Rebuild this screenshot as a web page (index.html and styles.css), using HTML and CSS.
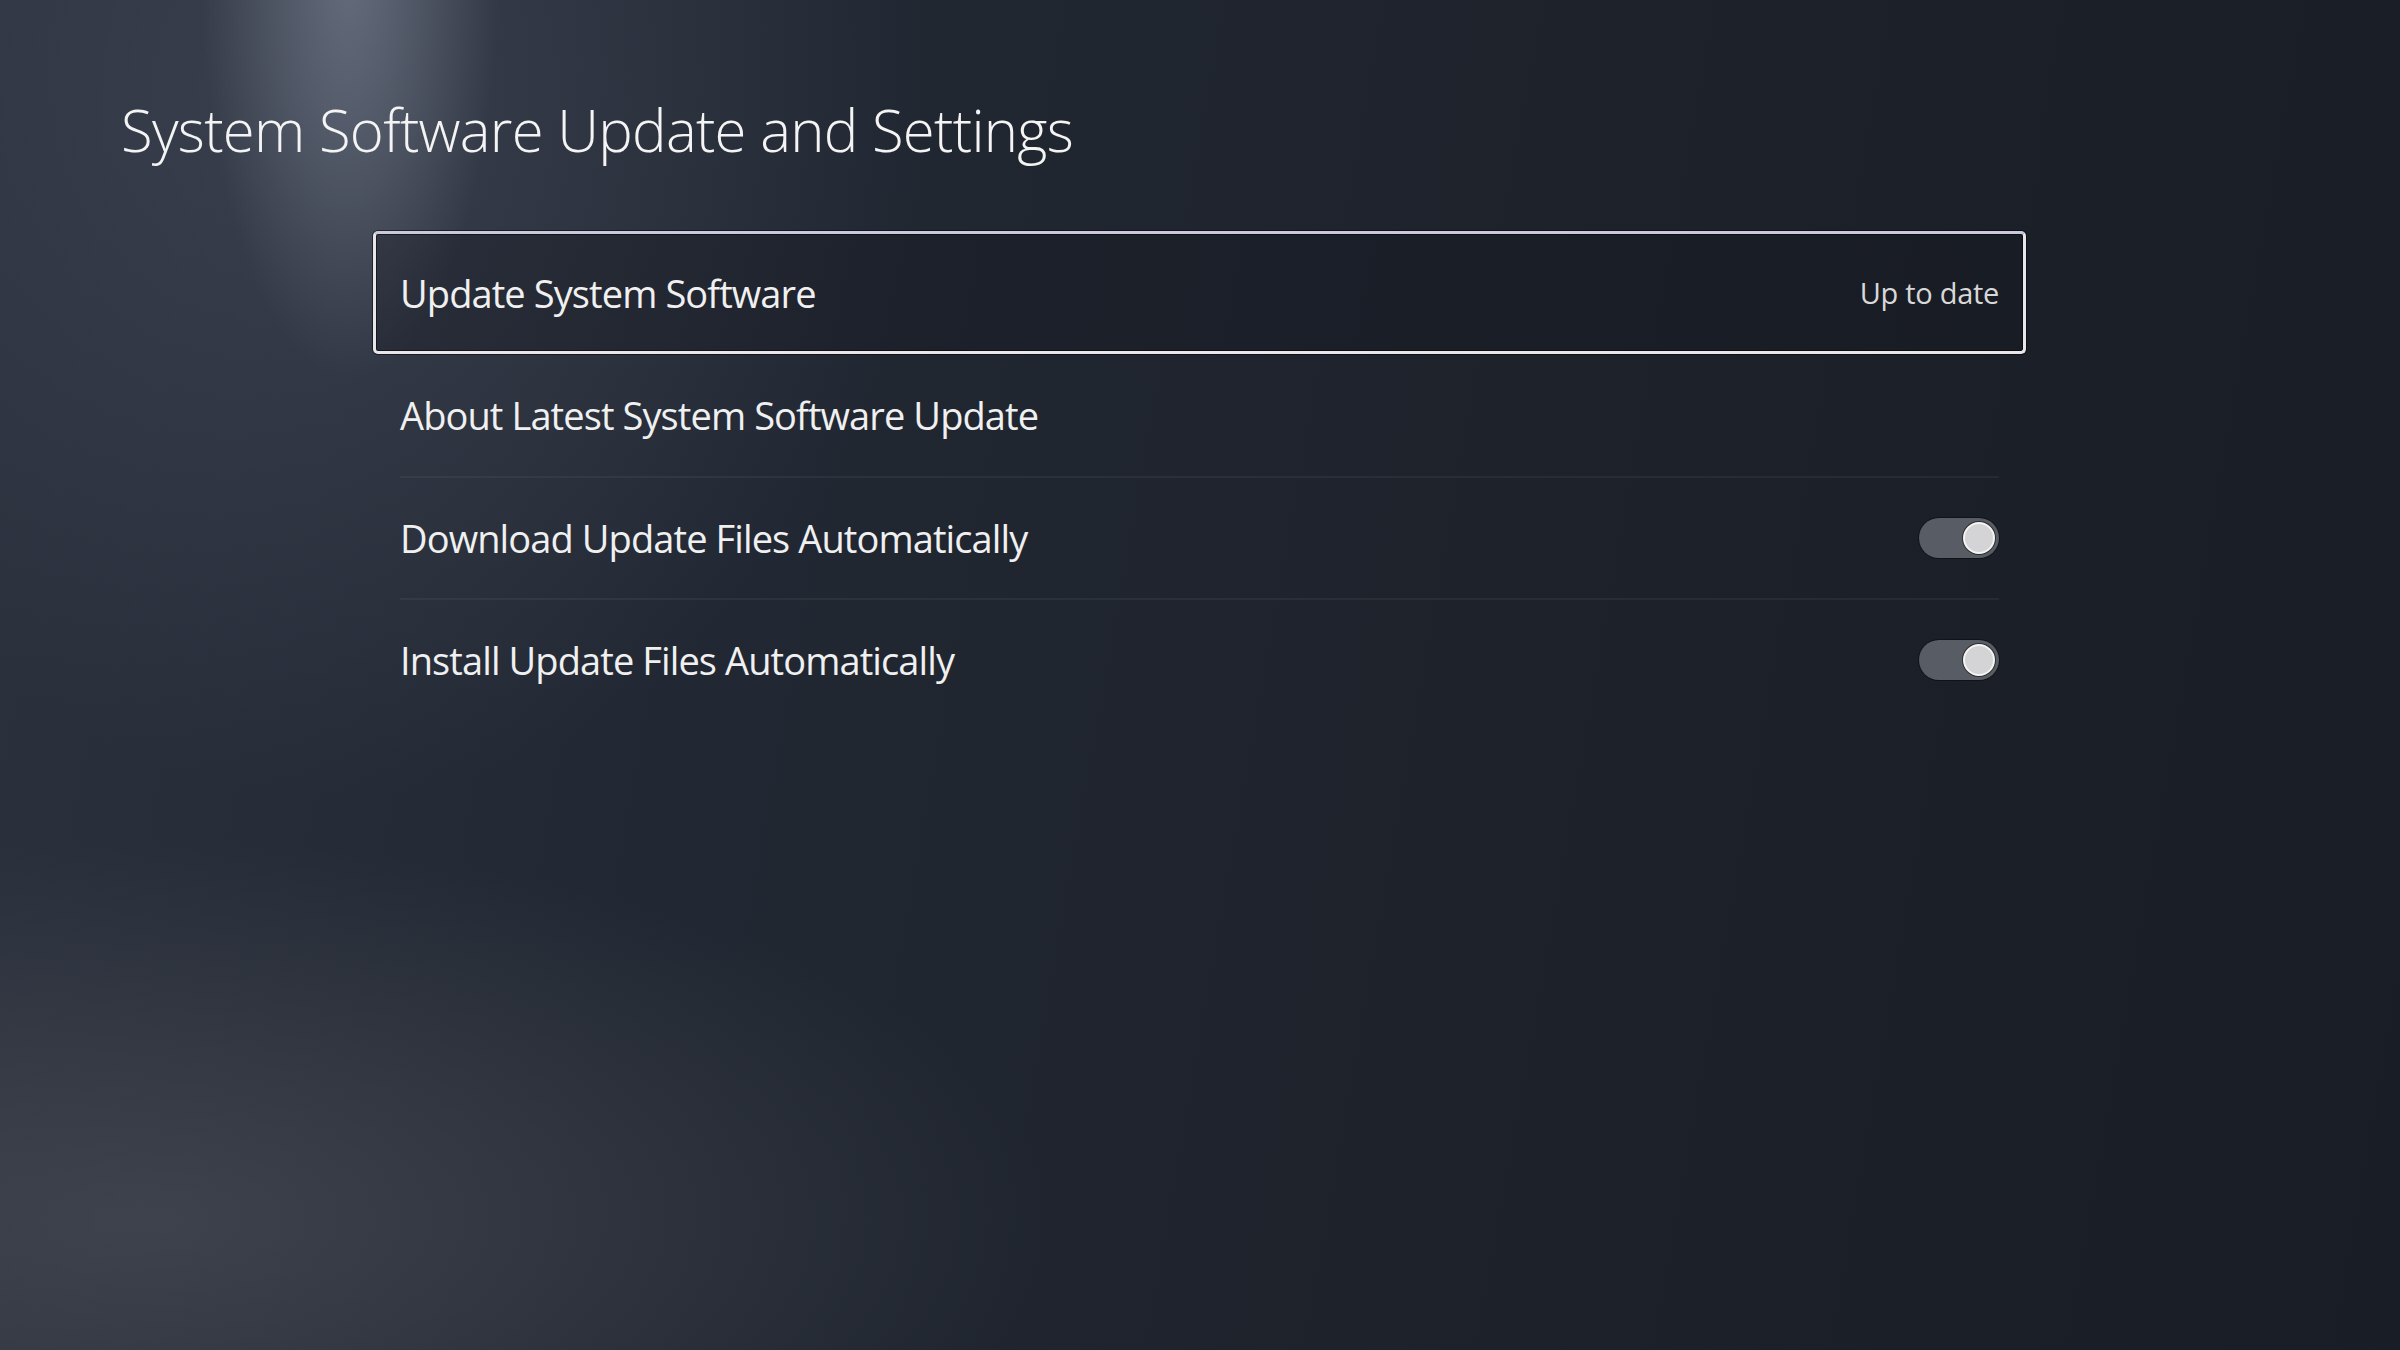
FILE: index.html
```html
<!DOCTYPE html>
<html lang="en">
<head>
    <meta charset="UTF-8">
    <meta name="viewport" content="width=device-width, initial-scale=1.0">
    <title>System Software Update and Settings</title>
    <link rel="stylesheet" href="styles.css">
</head>
<body>
    <div class="screen">
        <h1 class="page-title">System Software Update and Settings</h1>

        <ul class="settings-list">
            <li class="setting-item focused">
                <span class="setting-label">Update System Software</span>
                <span class="setting-value">Up to date</span>
            </li>
            <li class="setting-item">
                <span class="setting-label">About Latest System Software Update</span>
            </li>
            <li class="setting-item">
                <span class="setting-label">Download Update Files Automatically</span>
                <span class="toggle on"><span class="knob"></span></span>
            </li>
            <li class="setting-item">
                <span class="setting-label">Install Update Files Automatically</span>
                <span class="toggle on"><span class="knob"></span></span>
            </li>
        </ul>
    </div>
</body>
</html>
```

FILE: styles.css
```css
* {
    margin: 0;
    padding: 0;
    box-sizing: border-box;
    font-family: 'Open Sans', 'Noto Sans', sans-serif;
}

html, body {
    width: 100%;
    height: 100%;
}

body {
    background-color: #1b2029;
    color: #f2f2f2;
    overflow: hidden;
}

.screen {
    width: 2400px;
    height: 1350px;
    padding: 92px 0 0 121px;
    background:
        radial-gradient(ellipse 150px 420px at 350px -40px, rgba(140,148,165,0.55), rgba(140,148,165,0) 100%),
        radial-gradient(ellipse 600px 700px at 330px 100px, rgba(95,102,120,0.32), rgba(95,102,120,0) 100%),
        radial-gradient(ellipse 900px 380px at 150px 1220px, rgba(90,92,100,0.45), rgba(90,92,100,0) 100%),
        linear-gradient(100deg, #2b313d 0%, #222833 30%, #1d222b 60%, #191d25 100%);
}

.page-title {
    font-size: 58px;
    font-weight: 300;
    line-height: 76px;
    color: #f4f4f4;
    letter-spacing: -0.7px;
}

.settings-list {
    list-style: none;
    width: 1653px;
    margin: 63px 0 0 252px;
}

.setting-item {
    display: flex;
    align-items: center;
    justify-content: space-between;
    height: 122px;
    margin: 0 27px;
    padding: 0;
    border-top: 2px solid rgba(255,255,255,0.05);
}

.setting-item:nth-child(2) {
    border-top: none;
}

.setting-item.focused {
    height: 123px;
    margin: 0;
    padding: 0 24px;
    border: 3px solid #e8e6ea;
    border-top-color: #c9c8dc;
    border-radius: 5px;
    background-color: rgba(20,24,31,0.35);
    box-shadow: 0 0 0 1px rgba(0,0,0,0.5), inset 0 0 0 1px rgba(0,0,0,0.5);
}

.setting-label {
    font-size: 38px;
    font-weight: 400;
    color: #f0f0f0;
    letter-spacing: -0.9px;
}

.setting-value {
    font-size: 29px;
    color: #d8d8d8;
    letter-spacing: -0.3px;
}

.toggle {
    position: relative;
    display: block;
    width: 80px;
    height: 40px;
    border-radius: 20px;
    background-color: #585c64;
    box-shadow: 0 0 0 1px rgba(0,0,0,0.4);
}

.toggle .knob {
    position: absolute;
    top: 4px;
    right: 4px;
    width: 32px;
    height: 32px;
    border-radius: 50%;
    background-color: #d4d4d6;
    border: 2px solid #f4f4f4;
    box-shadow: 0 0 0 1px rgba(0,0,0,0.5);
}
```
